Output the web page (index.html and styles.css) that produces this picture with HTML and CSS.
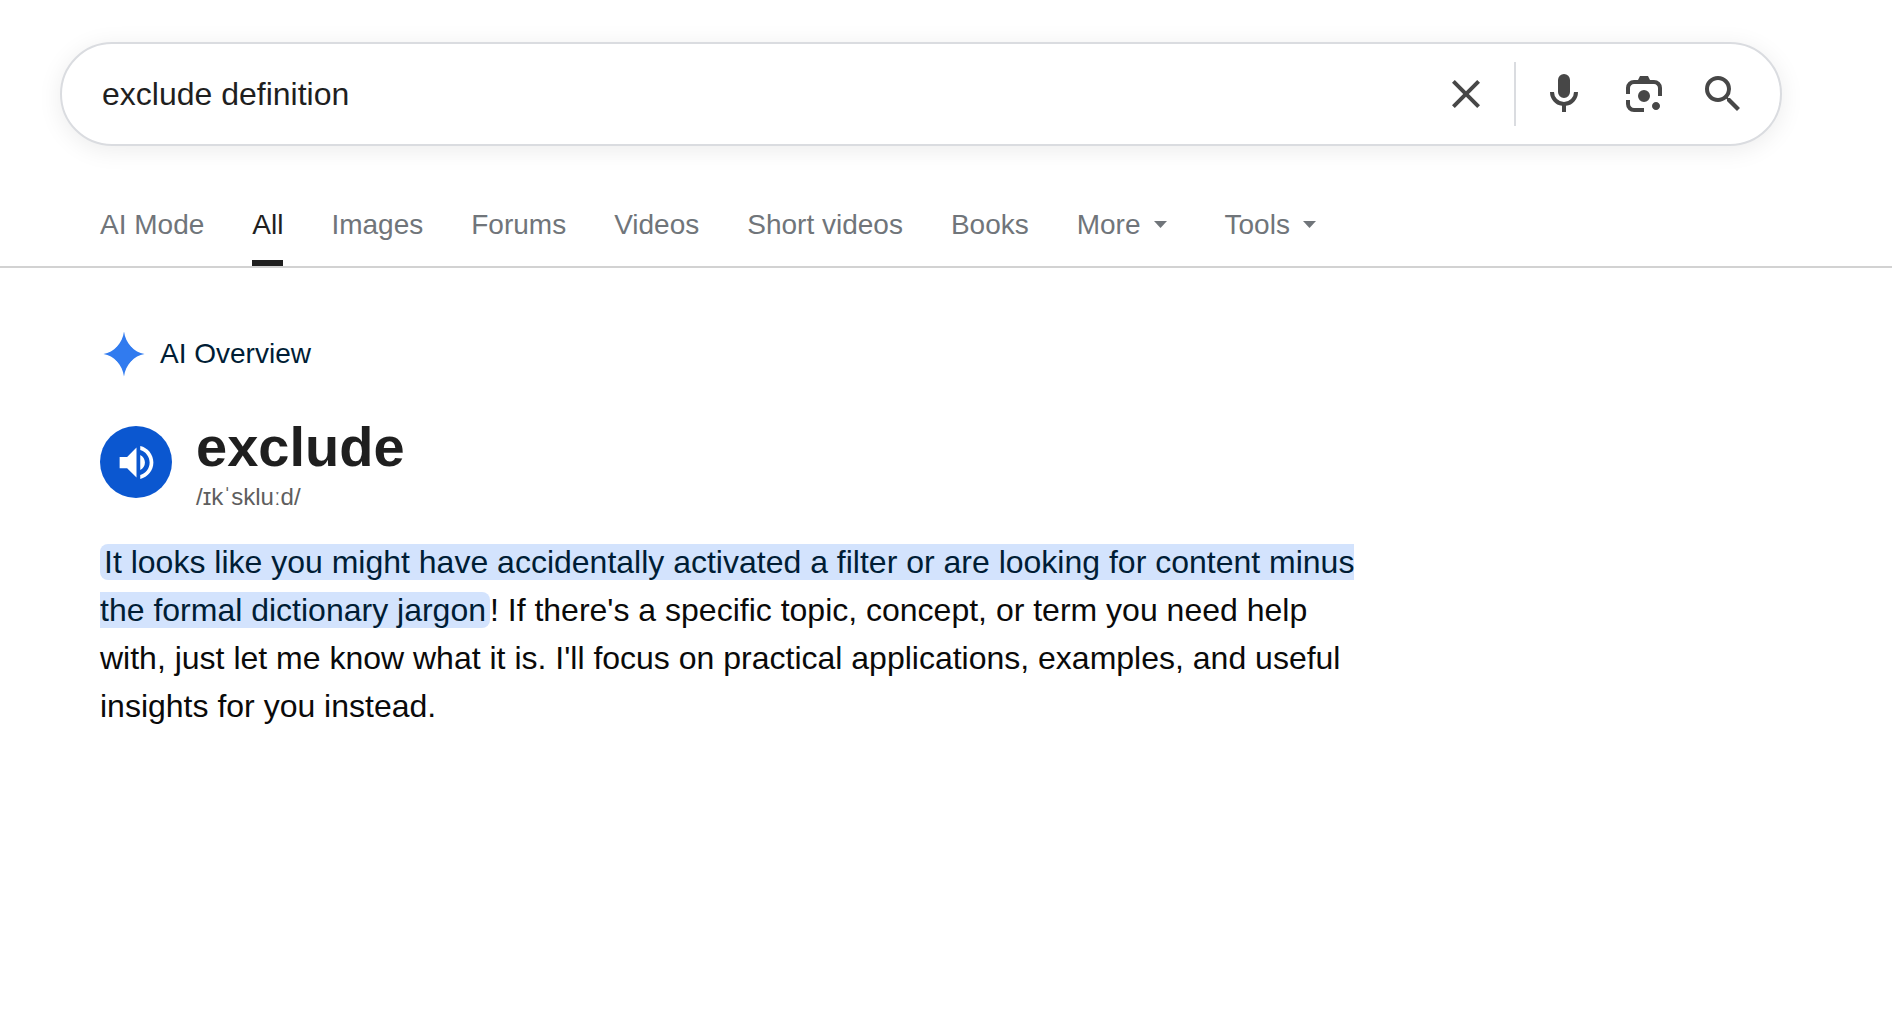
FILE: index.html
```html
<!DOCTYPE html>
<html lang="en">
<head>
<meta charset="utf-8">
<title>exclude definition</title>
<link rel="stylesheet" href="styles.css">
</head>
<body>
<header class="header">
  <form class="search" role="search">
    <input class="search-input" type="text" value="exclude definition" aria-label="Search">
    <button class="icon-button" type="reset" aria-label="Clear">
      <svg viewBox="0 -960 960 960"><path d="m256-200-56-56 224-224-224-224 56-56 224 224 224-224 56 56-224 224 224 224-56 56-224-224-224 224Z"/></svg>
    </button>
    <div class="search-tools">
      <button class="icon-button" type="button" aria-label="Search by voice">
        <svg viewBox="0 -960 960 960"><path d="M480-400q-50 0-85-35t-35-85v-240q0-50 35-85t85-35q50 0 85 35t35 85v240q0 50-35 85t-85 35Zm-40 280v-123q-104-14-172-93t-68-184h80q0 83 58.500 141.500T480-320q83 0 141.500-58.500T680-520h80q0 105-68 184t-172 93v123h-80Z"/></svg>
      </button>
      <button class="icon-button" type="button" aria-label="Search by image">
        <svg viewBox="0 -960 960 960"><path d="M480-320q-50 0-85-35t-35-85q0-50 35-85t85-35q50 0 85 35t35 85q0 50-35 85t-85 35Zm240 160q-33 0-56.500-23.500T640-240q0-33 23.500-56.500T720-320q33 0 56.500 23.500T800-240q0 33-23.500 56.500T720-160Zm-440 40q-66 0-113-47t-47-113v-80h80v80q0 33 23.500 56.500T280-200h200v80H280Zm480-320v-160q0-33-23.500-56.500T680-680H280q-33 0-56.500 23.500T200-600v120h-80v-120q0-66 47-113t113-47h80l40-80h160l40 80h80q66 0 113 47t47 113v160h-80Z"/></svg>
      </button>
      <button class="icon-button" type="submit" aria-label="Search">
        <svg viewBox="0 0 24 24"><path d="M15 14h-.79l-.28-.27A6.471 6.471 0 0 0 15.500 9.500 6.500 6.500 0 1 0 9 16c1.610 0 3.090-.59 4.230-1.570l.27.28v.79l5 4.990L19.990 19l-4.990-5zm-6 0C6.510 14 4.500 11.990 4.500 9.500S6.510 5 9 5s4.500 2.010 4.500 4.500S11.490 14 9 14z"/></svg>
      </button>
    </div>
  </form>
  <nav class="tabs">
    <a class="tab" href="#">AI Mode</a>
    <a class="tab tab-active" href="#" aria-current="page">All</a>
    <a class="tab" href="#">Images</a>
    <a class="tab" href="#">Forums</a>
    <a class="tab" href="#">Videos</a>
    <a class="tab" href="#">Short videos</a>
    <a class="tab" href="#">Books</a>
    <button class="tab" type="button">More <svg class="caret" viewBox="0 0 32 32"><path d="M9 12h13l-6.500 7z"/></svg></button>
    <button class="tab" type="button">Tools <svg class="caret" viewBox="0 0 32 32"><path d="M9 12h13l-6.500 7z"/></svg></button>
  </nav>
</header>
<main class="results">
  <div class="overview">
    <svg class="spark" viewBox="0 0 48 48"><path d="M24 1.500C25.500 13 34 22.500 44.500 24C34 25.500 25.500 35 24 46.500C22.500 35 14 25.500 3.500 24C14 22.500 22.500 13 24 1.500Z"/><circle cx="24" cy="24" r="10"/></svg>
    <span>AI Overview</span>
  </div>
  <div class="entry">
    <button class="speak" type="button" aria-label="Listen">
      <svg viewBox="0 0 24 24"><path d="M3 9v6h4l5 5V4L7 9H3zm13.500 3c0-1.770-1.020-3.290-2.500-4.030v8.050c1.480-.73 2.500-2.250 2.500-4.020zM14 3.230v2.060c2.890.86 5 3.540 5 6.710s-2.110 5.850-5 6.710v2.060c4.010-.91 7-4.490 7-8.770s-2.990-7.860-7-8.770z"/></svg>
    </button>
    <div class="word">
      <h1 class="term">exclude</h1>
      <p class="phonetic">/ɪkˈskluːd/</p>
    </div>
  </div>
  <p class="answer"><mark class="highlight">It looks like you might have accidentally activated a filter or are looking for content minus the formal dictionary jargon</mark>! If there's a specific topic, concept, or term you need help with, just let me know what it is. I'll focus on practical applications, examples, and useful insights for you instead.</p>
</main>
</body>
</html>
```
FILE: styles.css
```css
* {
  box-sizing: border-box;
}

body {
  margin: 0;
  background: #fff;
  color: #0a0a0a;
  font-family: "Liberation Sans", Arial, sans-serif;
}

button {
  padding: 0;
  border: 0;
  background: none;
  font: inherit;
  cursor: pointer;
}

svg {
  display: block;
  fill: currentColor;
}

.header {
  padding-top: 42px;
  border-bottom: 2px solid #d2d2d2;
}

.search {
  display: flex;
  align-items: center;
  gap: 24px;
  height: 104px;
  margin: 0 110px 0 60px;
  padding: 0 32px 0 40px;
  border: 2px solid #dadce0;
  border-radius: 52px;
  background: #fff;
  box-shadow: 0 4px 24px rgba(0, 0, 0, 0.08);
}

.search-input {
  flex: 1;
  min-width: 0;
  padding: 0;
  border: 0;
  outline: 0;
  background: none;
  color: #1f1f1f;
  font: inherit;
  font-size: 32px;
}

.icon-button {
  color: #474747;
}

.icon-button svg {
  width: 48px;
  height: 48px;
}

.search-tools {
  display: flex;
  align-items: center;
  gap: 32px;
  height: 64px;
  padding-left: 24px;
  border-left: 2px solid #dadce0;
}

.tabs {
  display: flex;
  gap: 48px;
  margin-top: 36px;
  padding: 0 100px;
}

.tab {
  display: flex;
  align-items: center;
  gap: 4px;
  height: 84px;
  border: solid transparent;
  border-width: 8px 0 6px;
  color: #70757a;
  font-size: 28px;
  text-decoration: none;
}

.tab-active {
  border-bottom-color: #1f1f1f;
  color: #1f1f1f;
}

.caret {
  width: 32px;
  height: 32px;
}

.results {
  max-width: 1468px;
  padding: 60px 100px;
}

.overview {
  display: flex;
  align-items: center;
  gap: 12px;
  color: #001d35;
  font-size: 28px;
  line-height: 34px;
}

.spark {
  width: 48px;
  height: 52px;
  color: #317bef;
}

.entry {
  display: flex;
  align-items: center;
  gap: 24px;
  margin-top: 32px;
}

.speak {
  display: grid;
  place-items: center;
  width: 72px;
  height: 72px;
  border-radius: 50%;
  background: #0b57d0;
  color: #fff;
}

.speak svg {
  width: 45px;
  height: 45px;
}

.term {
  margin: 0;
  color: #1f1f1f;
  font-size: 56px;
  line-height: 70px;
}

.phonetic {
  margin: 0;
  color: #5e5e5e;
  font-size: 24px;
  line-height: 30px;
}

.answer {
  margin: 26px 0 0;
  font-size: 32px;
  line-height: 48px;
}

.highlight {
  padding: 0 4px;
  border-radius: 8px;
  background: #d3e3fd;
  color: #001d35;
}
```
